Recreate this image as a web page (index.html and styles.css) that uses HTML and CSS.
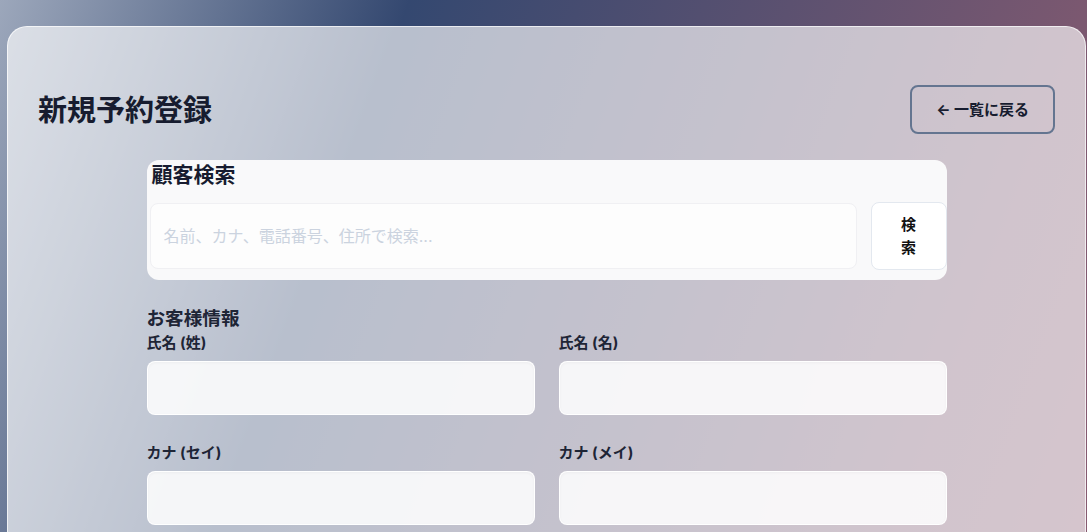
FILE: index.html
```html
<!DOCTYPE html>
<html lang="ja">
<head>
<meta charset="utf-8">
<title>新規予約登録</title>
<link rel="stylesheet" href="styles.css">
</head>
<body>
<div class="page">
  <main class="card">
    <header class="header">
      <h1 class="title">新規予約登録</h1>
      <button class="back-btn" type="button">← 一覧に戻る</button>
    </header>
    <div class="content">
      <section class="search-card">
        <h2 class="search-title">顧客検索</h2>
        <div class="search-row">
          <input class="search-input" type="text" placeholder="名前、カナ、電話番号、住所で検索...">
          <button class="search-btn" type="button">検索</button>
        </div>
      </section>
      <section class="customer">
        <h2 class="section-title">お客様情報</h2>
        <div class="grid">
          <div class="field">
            <label class="label">氏名 (姓)</label>
            <input class="input" type="text">
          </div>
          <div class="field">
            <label class="label">氏名 (名)</label>
            <input class="input" type="text">
          </div>
          <div class="field">
            <label class="label">カナ (セイ)</label>
            <input class="input" type="text">
          </div>
          <div class="field">
            <label class="label">カナ (メイ)</label>
            <input class="input" type="text">
          </div>
        </div>
      </section>
    </div>
  </main>
</div>
</body>
</html>
```

FILE: styles.css
```css
* { box-sizing: border-box; }
html, body {
  margin: 0;
  padding: 0;
  height: 100%;
  overflow: hidden;
}
body {
  font-family: Inter, "Noto Sans CJK JP", sans-serif;
  color: #1a1f36;
  background: linear-gradient(110deg, #9ca7bb 0%, #344870 32%, #7b5870 85%, #875a70 100%);
}
.page {
  padding: 26px 1px 0 7px;
  height: 100%;
}
.card {
  min-height: 700px;
  background: rgba(255, 255, 255, 0.65);
  border: 1px solid rgba(255, 255, 255, 0.7);
  border-radius: 20px;
  padding: 58px 30px 40px;
}
.header {
  display: flex;
  justify-content: space-between;
  align-items: center;
}
.title {
  margin: 0;
  font-size: 29px;
  font-weight: 700;
  line-height: 1.4;
  color: #171c2f;
  padding-top: 3px;
}
.back-btn {
  font-family: inherit;
  font-size: 15px;
  font-weight: 700;
  color: #171c2f;
  background: transparent;
  border: 2px solid #647590;
  border-radius: 8px;
  padding: 13px 24px;
  line-height: 19px;
}
.content {
  max-width: 800px;
  margin: 26px auto 0;
}
.search-card {
  background: #f9f9fa;
  border-radius: 12px;
  padding: 1px 0 10px 3px;
}
.search-title {
  margin: 0 0 0 2px;
  font-size: 21px;
  font-weight: 700;
  line-height: 28px;
  color: #171c2f;
}
.search-row {
  display: flex;
  align-items: center;
  gap: 14px;
  margin-top: 13px;
}
.search-input {
  flex: 1;
  height: 66px;
  font-family: inherit;
  font-size: 16px;
  background: #fdfdfd;
  border: 1px solid #f0f0f3;
  border-radius: 8px;
  padding: 0 13px;
  outline: none;
}
.search-input::placeholder {
  color: #cbd3df;
}
.search-btn {
  flex: 0 0 76px;
  width: 76px;
  height: 68px;
  font-family: inherit;
  font-size: 15px;
  font-weight: 700;
  line-height: 23px;
  color: #111;
  background: #ffffff;
  border: 1px solid #e3e8ef;
  border-radius: 8px;
  padding: 0 24px;
}
.customer {
  margin-top: 25px;
}
.section-title {
  margin: 0;
  font-size: 18.6px;
  font-weight: 700;
  line-height: 27px;
  color: #1e2536;
}
.grid {
  display: grid;
  grid-template-columns: 1fr 1fr;
  column-gap: 24px;
  row-gap: 28px;
  padding-top: 1px;
}
.field {
  display: flex;
  flex-direction: column;
}
.label {
  font-size: 15px;
  font-weight: 700;
  line-height: 20px;
  color: #1e2536;
  margin-bottom: 8px;
}
.input {
  height: 54px;
  background: rgba(255, 255, 255, 0.85);
  border: 1px solid rgba(255, 255, 255, 0.9);
  border-radius: 8px;
  box-shadow: inset 0 1px 3px rgba(0, 0, 0, 0.04);
  outline: none;
}
```
